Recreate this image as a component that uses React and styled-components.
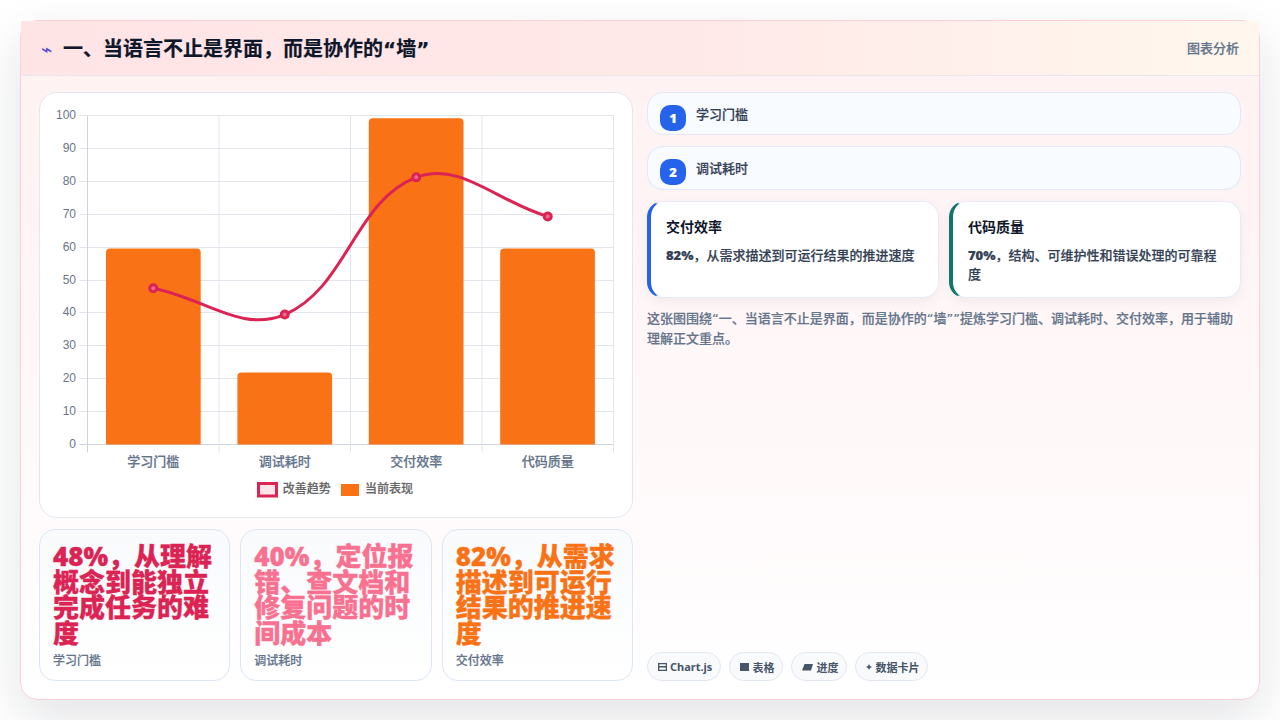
import React from "react";
import styled, { createGlobalStyle, css } from "styled-components";

const FONT = `"Open Sans", "Noto Sans CJK SC", sans-serif`;
const QUOTED_FONT = `"DejaVu Sans", "Noto Sans CJK SC", sans-serif`;

const Global = createGlobalStyle`
  html, body { margin: 0; padding: 0; background: #fff; }
  body { font-family: ${FONT}; width: 1280px; height: 720px; overflow: hidden; }
  * { box-sizing: border-box; }
`;

// the small cjk text in the shot sits a little heavier than plain medium
const heavy = css`
  -webkit-text-stroke: 0.2px currentColor;
`;

const Page = styled.div`
  width: 1280px;
  height: 720px;
  padding: 20px;
`;

const Frame = styled.div`
  height: 680px;
  display: flex;
  flex-direction: column;
  border: 1px solid #fbd0d6;
  border-radius: 18px;
  background: linear-gradient(180deg, #fff1f2 0%, #fff8f9 60%, #ffffff 100%);
  box-shadow: 0 18px 50px rgba(15, 23, 42, 0.12);
`;

const Header = styled.header`
  height: 55px;
  flex: none;
  display: flex;
  align-items: center;
  justify-content: space-between;
  padding: 0 20px;
  border-bottom: 1px solid #e8e6f2;
  background: linear-gradient(90deg, #ffe4e6 0%, #ffe8e8 50%, #fff7ed 100%);
`;

const Title = styled.h1`
  margin: 2px 0 0;
  display: flex;
  align-items: center;
  font-family: ${QUOTED_FONT};
  font-size: 20px;
  line-height: 28px;
  font-weight: 700;
  color: #0f172a;
  ${heavy}
`;

const Bolt = styled.span`
  width: 22px;
  flex: none;
  font-size: 19px;
  line-height: 1;
  font-weight: 400;
  color: #4f46e5;
  -webkit-text-stroke: 0;
`;

const Kicker = styled.span`
  margin-top: -1px;
  font-size: 13px;
  font-weight: 500;
  color: #64748b;
  ${heavy}
`;

const Body = styled.main`
  flex: 1;
  min-height: 0;
  display: grid;
  grid-template-columns: 594px 594px;
  gap: 14px;
  padding: 16px 18px 18px;
`;

const Column = styled.section`
  min-width: 0;
  display: flex;
  flex-direction: column;
  gap: 11px;
`;

const ChartCard = styled.div`
  height: 426px;
  flex: none;
  border: 1px solid #e2e8f0;
  border-radius: 18px;
  background: #fff;
`;

const StatRow = styled.div`
  flex: 1;
  display: grid;
  grid-template-columns: repeat(3, 1fr);
  gap: 10px;
`;

const Stat = styled.div`
  padding: 14px 13px 11px;
  display: flex;
  flex-direction: column;
  justify-content: space-between;
  border: 1px solid #dbe7f5;
  border-radius: 16px;
  background: linear-gradient(180deg, #f8fafc 0%, #ffffff 100%);
`;

const StatValue = styled.div`
  font-size: 26px;
  line-height: 25.7px;
  font-weight: 800;
  color: ${(p) => p.$color};
  -webkit-text-stroke: 0.3px currentColor;
`;

const StatLabel = styled.div`
  font-size: 12px;
  line-height: 16px;
  font-weight: 500;
  color: #64748b;
  ${heavy}
`;

const Step = styled.div`
  height: ${(p) => p.$h}px;
  flex: none;
  display: flex;
  align-items: flex-start;
  gap: 10px;
  padding: 12px 12px 0;
  border: 1px solid #e2e8f7;
  border-radius: 16px;
  background: #f8fbff;
  font-size: 13px;
  line-height: 18px;
  font-weight: 500;
  color: #334155;
  ${heavy}
`;

const StepNum = styled.span`
  width: 26px;
  height: 26px;
  flex: none;
  display: flex;
  align-items: center;
  justify-content: center;
  border-radius: 10px;
  background: #2563eb;
  color: #fff;
  font-size: 13px;
  font-weight: 800;
`;

const Cards = styled.div`
  display: grid;
  grid-template-columns: 1fr 1fr;
  gap: 10px;
`;

const Card = styled.div`
  height: 97px;
  padding: 13px 14px 0 15px;
  border: 1px solid #e8ebf7;
  border-left: 4px solid ${(p) => p.$accent};
  border-radius: 16px;
  background: #fff;
  box-shadow: 0 4px 12px rgba(15, 23, 42, 0.05);
`;

const CardTitle = styled.div`
  font-size: 14px;
  line-height: 24px;
  font-weight: 700;
  color: #0f172a;
`;

const CardText = styled.div`
  margin-top: 7px;
  font-size: 13px;
  line-height: 19px;
  font-weight: 500;
  color: #334155;
  ${heavy}
`;

const CardStrong = styled.strong`
  font-weight: 800;
`;

const Note = styled.p`
  margin: 0;
  font-family: ${QUOTED_FONT};
  font-size: 13px;
  line-height: 19.5px;
  font-weight: 500;
  color: #64748b;
  ${heavy}
`;

const Chips = styled.div`
  margin-top: auto;
  display: flex;
  gap: 8px;
`;

const Chip = styled.span`
  height: 29px;
  display: inline-flex;
  align-items: center;
  gap: 3px;
  padding: 0 8px 0 10px;
  border: 1px solid #e2e8f0;
  border-radius: 15px;
  background: #f8fafc;
  font-family: "Noto Sans", "Noto Sans CJK SC", sans-serif;
  font-size: 11px;
  font-weight: 700;
  color: #475569;
`;

const Glyph = styled.svg`
  width: ${(p) => p.$w}px;
  height: 8px;
  flex: none;
  fill: #475569;
`;

const Plot = styled.svg`
  display: block;
`;

const TICKS = [0, 10, 20, 30, 40, 50, 60, 70, 80, 90, 100];
const DATA = [
  { label: "学习门槛", bar: 59.6, line: 47.5 },
  { label: "调试耗时", bar: 21.9, line: 39.5 },
  { label: "交付效率", bar: 99.2, line: 81.2 },
  { label: "代码质量", bar: 59.6, line: 69.3 },
];

// coordinates are relative to the chart card
const X0 = 47.5;
const Y0 = 351.5;
const Y100 = 22.5;
const SLOT = 131.5;
const X1 = X0 + SLOT * 4;
const yOf = (v) => Y0 - ((Y0 - Y100) * v) / 100;
const gridY = (v) => Math.round(yOf(v) - 0.5) + 0.5;

// same spline as chart.js uses with tension 0.4
const linePath = () => {
  const pts = DATA.map((d, i) => ({ x: X0 + SLOT * (i + 0.5), y: yOf(d.line) }));
  const ctrl = (prev, cur, next) => {
    const d01 = Math.hypot(cur.x - prev.x, cur.y - prev.y);
    const d12 = Math.hypot(next.x - cur.x, next.y - cur.y);
    const s01 = d01 / (d01 + d12 || 1);
    const s12 = d12 / (d01 + d12 || 1);
    const dx = next.x - prev.x;
    const dy = next.y - prev.y;
    return {
      p: { x: cur.x - 0.4 * s01 * dx, y: cur.y - 0.4 * s01 * dy },
      n: { x: cur.x + 0.4 * s12 * dx, y: cur.y + 0.4 * s12 * dy },
    };
  };
  const cs = pts.map((p, i) => ctrl(pts[i - 1] || p, p, pts[i + 1] || p));
  let d = `M${pts[0].x} ${pts[0].y}`;
  for (let i = 1; i < pts.length; i++) {
    d += ` C${cs[i - 1].n.x} ${cs[i - 1].n.y} ${cs[i].p.x} ${cs[i].p.y} ${pts[i].x} ${pts[i].y}`;
  }
  return { d, pts };
};

function Chart() {
  const { d, pts } = linePath();
  return (
    <Plot width="592" height="424" viewBox="0 0 592 424">
      {TICKS.map((t) => (
        <g key={t}>
          <line x1={X0 - 8} x2={X1} y1={gridY(t)} y2={gridY(t)} stroke={t === 0 ? "#cdd3df" : "#e2e5ec"} />
          <text x={36} y={yOf(t) + 3.5} textAnchor="end" fontFamily="Liberation Sans" fontSize="12" fill="#6b7587">
            {t}
          </text>
        </g>
      ))}
      {[0, 1, 2, 3, 4].map((i) => (
        <line key={i} x1={X0 + SLOT * i} x2={X0 + SLOT * i} y1={Y100} y2={Y0 + 8} stroke={i === 0 ? "#cdd3df" : "#e2e5ec"} />
      ))}
      {DATA.map((b, i) => {
        const x = 66 + 131.4 * i;
        const top = yOf(b.bar);
        return (
          <path
            key={b.label}
            d={`M${x} ${Y0} V${top + 4} Q${x} ${top} ${x + 4} ${top} H${x + 90.7} Q${x + 94.7} ${top} ${x + 94.7} ${top + 4} V${Y0} Z`}
            fill="#f97316"
          />
        );
      })}
      <path d={d} fill="none" stroke="#dc2454" strokeWidth="3" />
      {pts.map((p) => (
        <circle key={p.x} cx={p.x} cy={p.y} r="3.5" fill="#ee6a8e" stroke="#dc2454" strokeWidth="3" />
      ))}
      {DATA.map((b, i) => (
        <text
          key={b.label}
          x={X0 + SLOT * (i + 0.5)}
          y={373}
          textAnchor="middle"
          fontFamily={FONT}
          fontWeight="500"
          fontSize="13"
          fill="#64748b"
          stroke="#64748b"
          strokeWidth="0.2"
        >
          {b.label}
        </text>
      ))}
      <rect x="218.5" y="390.5" width="18" height="12.5" fill="#ffe4ea" stroke="#dc2454" strokeWidth="3" />
      <text x="242.7" y="399.5" fontFamily={FONT} fontWeight="500" fontSize="12" fill="#666" stroke="#666" strokeWidth="0.2">
        改善趋势
      </text>
      <rect x="301" y="391" width="18" height="12" fill="#f97316" />
      <text x="325" y="399.5" fontFamily={FONT} fontWeight="500" fontSize="12" fill="#666" stroke="#666" strokeWidth="0.2">
        当前表现
      </text>
    </Plot>
  );
}

const STATS = [
  { value: "48%，从理解概念到能独立完成任务的难度", label: "学习门槛", color: "#dc2454" },
  { value: "40%，定位报错、查文档和修复问题的时间成本", label: "调试耗时", color: "#f87190" },
  { value: "82%，从需求描述到可运行结果的推进速度", label: "交付效率", color: "#f97316" },
];

export default function App() {
  return (
    <Page>
      <Global />
      <Frame>
        <Header>
          <Title>
            <Bolt>⌁</Bolt>一、当语言不止是界面，而是协作的“墙”
          </Title>
          <Kicker>图表分析</Kicker>
        </Header>
        <Body>
          <Column>
            <ChartCard>
              <Chart />
            </ChartCard>
            <StatRow>
              {STATS.map((s) => (
                <Stat key={s.label}>
                  <StatValue $color={s.color}>{s.value}</StatValue>
                  <StatLabel>{s.label}</StatLabel>
                </Stat>
              ))}
            </StatRow>
          </Column>
          <Column>
            <Step $h={43}>
              <StepNum>1</StepNum>
              学习门槛
            </Step>
            <Step $h={44}>
              <StepNum>2</StepNum>
              调试耗时
            </Step>
            <Cards>
              <Card $accent="#2563eb">
                <CardTitle>交付效率</CardTitle>
                <CardText>
                  <CardStrong>82%</CardStrong>，从需求描述到可运行结果的推进速度
                </CardText>
              </Card>
              <Card $accent="#0f766e">
                <CardTitle>代码质量</CardTitle>
                <CardText>
                  <CardStrong>70%</CardStrong>，结构、可维护性和错误处理的可靠程度
                </CardText>
              </Card>
            </Cards>
            <Note>这张图围绕“一、当语言不止是界面，而是协作的“墙””提炼学习门槛、调试耗时、交付效率，用于辅助理解正文重点。</Note>
            <Chips>
              <Chip>
                <Glyph $w={9} viewBox="0 0 9 8">
                  <path fillRule="evenodd" d="M0 0h9v8H0zM1.3 1.3v1.7h6.4V1.3zM1.3 4.6v2.1h6.4V4.6z" />
                </Glyph>
                Chart.js
              </Chip>
              <Chip>
                <Glyph $w={9} viewBox="0 0 9 8">
                  <path d="M0 0h9v8H0z" />
                </Glyph>
                表格
              </Chip>
              <Chip>
                <Glyph $w={11} viewBox="0 0 11 8">
                  <path d="M2.5 1H11L9 7.5H0z" />
                </Glyph>
                进度
              </Chip>
              <Chip>
                <Glyph $w={6} viewBox="0 0 6 8">
                  <path d="M3 1l1 2 2 1-2 1-1 2-1-2-2-1 2-1z" />
                </Glyph>
                数据卡片
              </Chip>
            </Chips>
          </Column>
        </Body>
      </Frame>
    </Page>
  );
}
